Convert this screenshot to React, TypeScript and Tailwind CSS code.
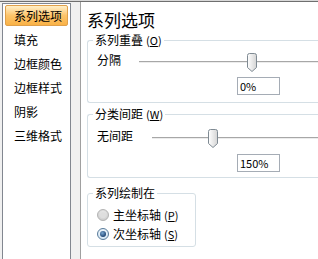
import React from "react";

const FONT = { fontFamily: '"Noto Sans CJK SC", "Noto Sans", sans-serif' };

function Thumb() {
  return (
    <svg width="10" height="19" viewBox="0 0 10 19" className="block">
      <defs>
        <linearGradient id="tg" x1="0" y1="0" x2="1" y2="0">
          <stop offset="0" stopColor="#ffffff" />
          <stop offset="1" stopColor="#d4d4d4" />
        </linearGradient>
      </defs>
      <path
        d="M0.5,2.5 Q0.5,0.5 2.5,0.5 H7.5 Q9.5,0.5 9.5,2.5 V14.5 L5,18.5 L0.5,14.5 Z"
        fill="url(#tg)"
        stroke="#7f8a93"
        strokeWidth="1"
      />
    </svg>
  );
}

function Slider({ offset }: { offset: number }) {
  return (
    <div className="relative flex-1 h-[20px]">
      <div className="absolute left-0 right-0 top-[9px] h-px bg-[#a7a7a7]" />
      <div className="absolute left-0 right-0 top-[10px] h-px bg-[#ececec]" />
      <div className="absolute top-[1px]" style={{ left: offset }}>
        <Thumb />
      </div>
    </div>
  );
}

function Radio({ checked }: { checked: boolean }) {
  return (
    <svg width="12" height="12" viewBox="0 0 12 12" className="block">
      <defs>
        <radialGradient id="ru" cx="0.5" cy="0.4" r="0.6">
          <stop offset="0" stopColor="#f4f4f4" />
          <stop offset="1" stopColor="#c9c9c9" />
        </radialGradient>
        <radialGradient id="rc" cx="0.5" cy="0.4" r="0.6">
          <stop offset="0" stopColor="#ffffff" />
          <stop offset="1" stopColor="#cfe3f3" />
        </radialGradient>
        <radialGradient id="rd" cx="0.4" cy="0.35" r="0.7">
          <stop offset="0" stopColor="#7aa6d0" />
          <stop offset="1" stopColor="#153b6a" />
        </radialGradient>
      </defs>
      {checked ? (
        <>
          <circle cx="6" cy="6" r="5.5" fill="url(#rc)" stroke="#5b7c9a" />
          <circle cx="6" cy="6" r="3" fill="url(#rd)" />
        </>
      ) : (
        <>
          <circle cx="6" cy="6" r="5.5" fill="url(#ru)" stroke="#b4b4b4" />
          <circle cx="6" cy="6" r="3" fill="#dedede" />
        </>
      )}
    </svg>
  );
}

function Mn({ k }: { k: string }) {
  return (
    <span className="ml-[3px] text-[11px]">
      (<span className="underline">{k}</span>)
    </span>
  );
}

const items = ["系列选项", "填充", "边框颜色", "边框样式", "阴影", "三维格式"];

export default function App() {
  return (
    <div
      className="w-[318px] h-[259px] bg-[#f0f0f0] overflow-hidden flex flex-col text-[12px] text-black"
      style={FONT}
    >
      <div className="h-px bg-[#d8d8d8]" />
      <div className="h-px bg-[#6f6f6f]" />
      <div className="flex flex-1 min-h-0">
        <div className="ml-[2px] mt-px w-[69px] bg-white border border-b-0 border-[#828790] pt-px px-[2px]">
          {items.map((t, i) =>
            i === 0 ? (
              <div
                key={t}
                className="h-[21px] mb-[3px] pl-[8px] flex items-center rounded-[2px] border border-[#e0a04a] bg-gradient-to-b from-[#fff0c8] via-[#fdc46a] to-[#f9b246] whitespace-nowrap"
              >
                {t}
              </div>
            ) : (
              <div key={t} className="h-[21px] mb-[3px] pl-[9px] flex items-center whitespace-nowrap">
                {t}
              </div>
            )
          )}
        </div>
        <div className="w-[9px]" />
        <div className="flex-1 bg-white border-l border-[#a0a0a0] flex flex-col pl-[6px] overflow-hidden">
          <div className="pt-[8px] leading-[20px] text-[17px]">系列选项</div>

          <fieldset className="mt-[3px] border border-r-0 border-[#d5dfe5] rounded-l-[3px] pb-[7px]">
            <legend className="ml-[5px] px-[2px] leading-[14px]">
              系列重叠<Mn k="O" />
            </legend>
            <div className="mt-[5px] h-[20px] flex">
              <div className="w-[51px] pl-[9px] leading-[16px]">分隔</div>
              <Slider offset={108} />
            </div>
            <div className="mt-[5px] ml-[149px] w-[43px] h-[18px] border border-[#a5acb5] pl-[2px] text-[11px] leading-[16px]">
              0%
            </div>
          </fieldset>

          <fieldset className="mt-[4px] border border-r-0 border-[#d5dfe5] rounded-l-[3px] pb-[5px]">
            <legend className="ml-[5px] px-[2px] leading-[14px]">
              分类间距<Mn k="W" />
            </legend>
            <div className="mt-[7px] h-[20px] flex">
              <div className="w-[64px] pl-[9px] leading-[16px] whitespace-nowrap">无间距</div>
              <Slider offset={56} />
            </div>
            <div className="mt-[6px] ml-[149px] w-[43px] h-[18px] border border-[#a5acb5] pl-[2px] text-[11px] leading-[16px]">
              150%
            </div>
          </fieldset>

          <fieldset className="mt-[8px] w-[109px] border border-[#d5dfe5] rounded-[3px] pb-[3px]">
            <legend className="ml-[5px] px-[2px] leading-[14px]">系列绘制在</legend>
            <div className="mt-[5px] h-[19px] flex items-center pl-[9px] gap-[4px] whitespace-nowrap">
              <Radio checked={false} />
              <span>
                主坐标轴<Mn k="P" />
              </span>
            </div>
            <div className="h-[19px] flex items-center pl-[9px] gap-[4px] whitespace-nowrap">
              <Radio checked={true} />
              <span>
                次坐标轴<Mn k="S" />
              </span>
            </div>
          </fieldset>
        </div>
      </div>
    </div>
  );
}
